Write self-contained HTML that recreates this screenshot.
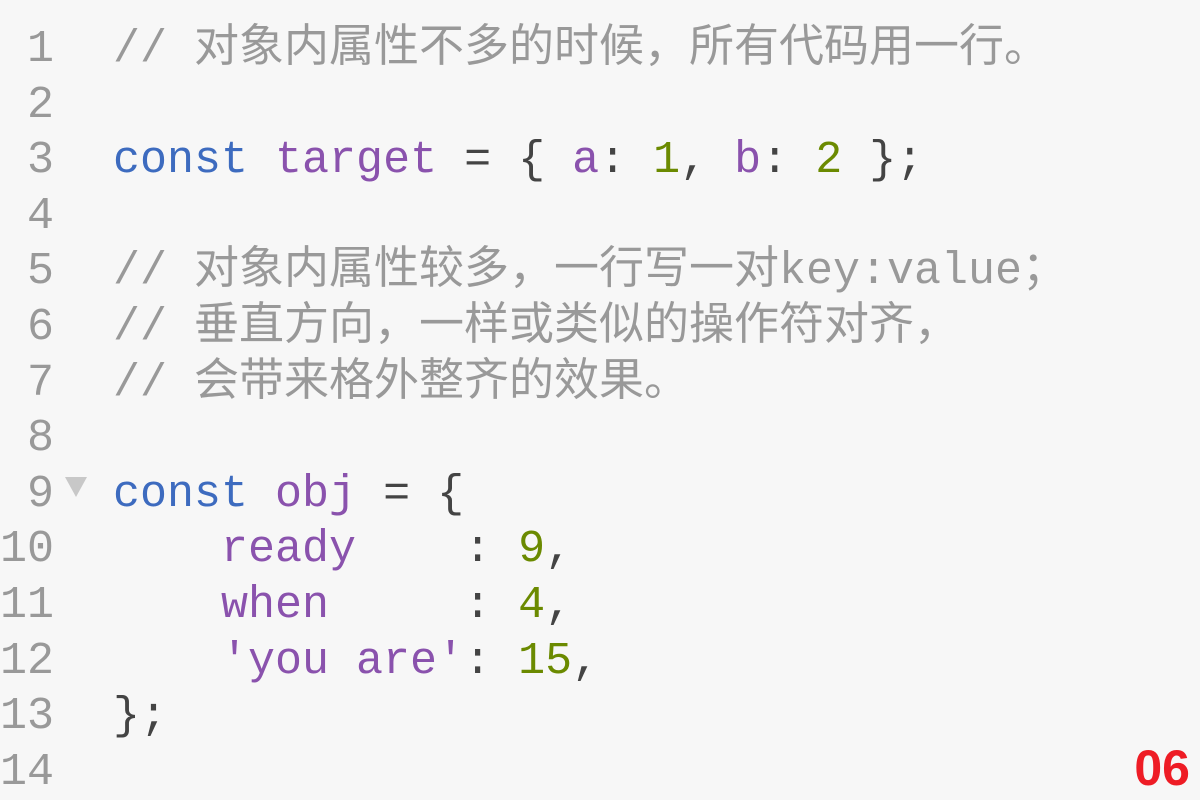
<!DOCTYPE html>
<html><head><meta charset="utf-8"><style>
html,body{margin:0;padding:0;background:#f7f7f7;width:1200px;height:800px;overflow:hidden}
.wrap{position:absolute;left:0;top:22px;font-family:"Liberation Mono","Noto Sans CJK SC",monospace;font-size:45px;line-height:55.6px}
.ln{position:absolute;left:0;top:0;width:54px;text-align:right;color:#999;white-space:pre}
.code{position:absolute;left:113px;top:0;color:#444;white-space:pre}
.k{color:#3d6bbf}.v{color:#8a52ad}.n{color:#6b8a00}.c{color:#999}
.tri{position:absolute;left:65px;top:477px;width:0;height:0;border-left:11px solid transparent;border-right:11px solid transparent;border-top:20px solid #c8c8c8}
.tag{position:absolute;right:10px;top:738px;font-family:"Liberation Sans",sans-serif;font-weight:bold;font-size:50px;line-height:60px;color:#ee1c25}
</style></head><body>
<div class="wrap"><div class="ln">1
2
3
4
5
6
7
8
9
10
11
12
13
14</div><div class="code"><span class="c">// 对象内属性不多的时候，所有代码用一行。</span>

<span class="k">const</span> <span class="v">target</span> = { <span class="v">a</span>: <span class="n">1</span>, <span class="v">b</span>: <span class="n">2</span> };

<span class="c">// 对象内属性较多，一行写一对key:value；</span>
<span class="c">// 垂直方向，一样或类似的操作符对齐，</span>
<span class="c">// 会带来格外整齐的效果。</span>

<span class="k">const</span> <span class="v">obj</span> = {
    <span class="v">ready</span>    : <span class="n">9</span>,
    <span class="v">when</span>     : <span class="n">4</span>,
    <span class="v">'you are'</span>: <span class="n">15</span>,
};</div></div>
<div class="tri"></div>
<div class="tag">06</div>
</body></html>
